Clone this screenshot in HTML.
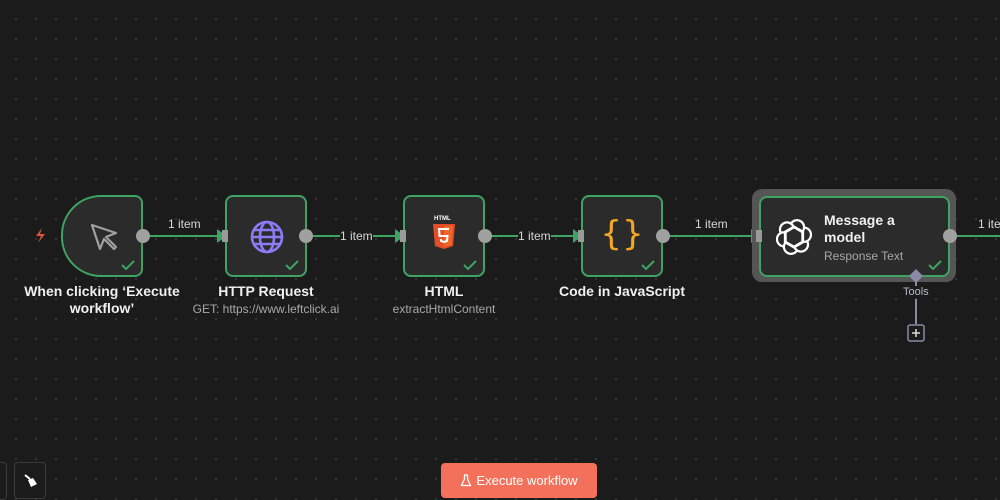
<!DOCTYPE html>
<html><head><style>
body{margin:0;width:1000px;height:500px;overflow:hidden;background:#1b1b1b;background-image:radial-gradient(circle,#3a3a3a 0.8px,transparent 1.2px);background-size:20px 20px;background-position:6px 9px;font-family:"Liberation Sans",sans-serif;position:relative}
.n{position:absolute;top:195px;width:78px;height:78px;border:2px solid #3fa364;background:#2b2b2b;border-radius:8px;box-sizing:content-box}
.ck{position:absolute;right:6px;bottom:4px}
.out{position:absolute;width:14px;height:14px;border-radius:50%;background:#a0a0a0;top:229px}
.in{position:absolute;width:6px;height:12px;background:#9a9a9a;top:230px}
.t{position:absolute;color:#f0f0f0;font-size:14px;font-weight:bold;text-align:center;width:220px;line-height:17px}
.s{position:absolute;color:#a8a8a8;font-size:12px;text-align:center;width:220px}
.lbl{position:absolute;color:#d8d8d8;font-size:12px;white-space:nowrap}
</style></head><body>
<svg width="1000" height="500" style="position:absolute;left:0;top:0">
<g stroke="#3fa364" stroke-width="2" fill="#3fa364">
<line x1="150" y1="236" x2="218" y2="236"/><path d="M218 231 L225 236 L218 241Z"/>
<line x1="313" y1="236" x2="396" y2="236"/><path d="M396 231 L403 236 L396 241Z"/>
<line x1="491" y1="236" x2="574" y2="236"/><path d="M574 231 L581 236 L574 241Z"/>
<line x1="669" y1="236" x2="752" y2="236"/><path d="M752 231 L759 236 L752 241Z"/>
<line x1="956" y1="236" x2="1000" y2="236"/>
</g>
<path d="M42 228 L36 236 L41 236 L38 243 L45 234 L40 234 Z" fill="#e0533f"/>
<line x1="916" y1="276" x2="916" y2="286" stroke="#8a8aa8" stroke-width="2"/>
<line x1="916" y1="299" x2="916" y2="324" stroke="#8a8aa8" stroke-width="2"/>
<rect x="908" y="325" width="16" height="16" rx="2" fill="#1b1b1b" stroke="#8a8aa8" stroke-width="1.5"/>
<path d="M916 329v8M912 333h8" stroke="#ddd" stroke-width="1.5"/>
</svg>
<div class="lbl" style="left:168px;top:217px">1 item</div>
<div class="lbl" style="left:340px;top:229px;background:#1b1b1b">1 item</div>
<div class="lbl" style="left:518px;top:229px;background:#1b1b1b">1 item</div>
<div class="lbl" style="left:695px;top:217px">1 item</div>
<div class="lbl" style="left:978px;top:217px">1 item</div>

<div class="n" style="left:61px;border-radius:40px 8px 8px 40px">
<svg style="position:absolute;left:25px;top:24px" width="32" height="32" viewBox="0 0 32 32"><path d="M4 4 L12 28 L16 18 L26 28 L28 26 L18 16 L28 12 Z" fill="none" stroke="#a0a0a0" stroke-width="2.2" stroke-linejoin="round"/></svg>
<svg class="ck" width="14" height="12"><path d="M1 6 L5 10 L13 2" stroke="#3fa364" stroke-width="2" fill="none"/></svg></div>
<div class="out" style="left:136px"></div>

<div class="n" style="left:225px">
<svg style="position:absolute;left:22px;top:22px" width="36" height="36" viewBox="0 0 36 36" fill="none" stroke="#8b7cf6" stroke-width="2.6"><circle cx="18" cy="18" r="15"/><ellipse cx="18" cy="18" rx="7" ry="15"/><line x1="3" y1="18" x2="33" y2="18"/><line x1="5" y1="11" x2="31" y2="11"/><line x1="5" y1="25" x2="31" y2="25"/></svg>
<svg class="ck" width="14" height="12"><path d="M1 6 L5 10 L13 2" stroke="#3fa364" stroke-width="2" fill="none"/></svg></div>
<div class="in" style="left:222px"></div><div class="out" style="left:299px"></div>

<div class="n" style="left:403px">
<div style="position:absolute;left:29px;top:19px;color:#fff;font-size:6px;font-weight:bold">HTML</div>
<svg style="position:absolute;left:28px;top:27px" width="22" height="25" viewBox="0 0 22 25"><path d="M0 0H22L20 22L11 25L2 22Z" fill="#e44d26"/><path d="M11 2H20L18.3 21L11 23Z" fill="#f16529"/><path d="M16 5H6L6.6 12H14.5L14 17L11 18L8 17L7.8 15" fill="none" stroke="#fff" stroke-width="2"/></svg>
<svg class="ck" width="14" height="12"><path d="M1 6 L5 10 L13 2" stroke="#3fa364" stroke-width="2" fill="none"/></svg></div>
<div class="in" style="left:400px"></div><div class="out" style="left:478px"></div>

<div class="n" style="left:581px">
<div style="position:absolute;left:0;width:78px;top:17px;text-align:center;color:#f5a623;font-size:34px;font-family:'DejaVu Sans',sans-serif">{}</div>
<svg class="ck" width="14" height="12"><path d="M1 6 L5 10 L13 2" stroke="#3fa364" stroke-width="2" fill="none"/></svg></div>
<div class="in" style="left:578px"></div><div class="out" style="left:656px"></div>

<div style="position:absolute;left:752px;top:189px;width:204px;height:93px;background:#555;border-radius:10px"></div>
<div class="n" style="left:759px;top:196px;width:187px;height:77px;background:#2b2b2b">
<svg style="position:absolute;left:15px;top:21px" width="36" height="36" viewBox="0 0 24 24" fill="none" stroke="#fff" stroke-width="1.5"><g transform="translate(12 12)"><path d="M-2 -9 A4.5 4.5 0 0 1 6 -4 L6 3 L0 6.5"/><path d="M-2 -9 A4.5 4.5 0 0 1 6 -4 L6 3 L0 6.5" transform="rotate(60)"/><path d="M-2 -9 A4.5 4.5 0 0 1 6 -4 L6 3 L0 6.5" transform="rotate(120)"/><path d="M-2 -9 A4.5 4.5 0 0 1 6 -4 L6 3 L0 6.5" transform="rotate(180)"/><path d="M-2 -9 A4.5 4.5 0 0 1 6 -4 L6 3 L0 6.5" transform="rotate(240)"/><path d="M-2 -9 A4.5 4.5 0 0 1 6 -4 L6 3 L0 6.5" transform="rotate(300)"/></g></svg>
<div style="position:absolute;left:63px;top:14px;color:#f0f0f0;font-size:14px;font-weight:bold;line-height:17px">Message a<br>model</div>
<div style="position:absolute;left:63px;top:51px;color:#a8a8a8;font-size:12px">Response Text</div>
<svg class="ck" width="14" height="12"><path d="M1 6 L5 10 L13 2" stroke="#3fa364" stroke-width="2" fill="none"/></svg></div>
<div class="in" style="left:756px"></div><div class="out" style="left:943px"></div>
<svg style="position:absolute;left:908px;top:268px" width="16" height="16"><path d="M8 1 L15 8 L8 15 L1 8Z" fill="#8a8aa8"/></svg>
<div class="lbl" style="left:903px;top:286px;font-size:11px;color:#b8b8c8">Tools</div>

<div class="t" style="left:-8px;top:283px">When clicking ‘Execute<br>workflow’</div>
<div class="t" style="left:156px;top:283px">HTTP Request</div>
<div class="s" style="left:156px;top:302px">GET: https://www.leftclick.ai</div>
<div class="t" style="left:334px;top:283px">HTML</div>
<div class="s" style="left:334px;top:302px">extractHtmlContent</div>
<div class="t" style="left:512px;top:283px">Code in JavaScript</div>

<div style="position:absolute;left:-5px;top:462px;width:10px;height:36px;border:1px solid #3a3a3a;border-radius:4px"></div>
<div style="position:absolute;left:14px;top:462px;width:30px;height:35px;border:1px solid #3a3a3a;border-radius:4px;background:#1b1b1b">
<svg style="position:absolute;left:8px;top:10px" width="16" height="16" viewBox="0 0 16 16"><path d="M2 2 L7 6" stroke="#fff" stroke-width="2"/><path d="M5 7 L10 5 L14 11 L8 14 Z" fill="#fff"/></svg></div>
<div style="position:absolute;left:441px;top:463px;width:156px;height:35px;background:#f3705a;border-radius:4px;color:#fff;font-size:13px;line-height:35px;text-align:center">
<svg style="vertical-align:-2px;margin-right:4px" width="12" height="13" viewBox="0 0 12 13" fill="none" stroke="#fff" stroke-width="1.3"><path d="M4 1H8M4.5 1V5L1.5 11.5H10.5L7.5 5V1"/></svg>Execute workflow</div>
</body></html>
